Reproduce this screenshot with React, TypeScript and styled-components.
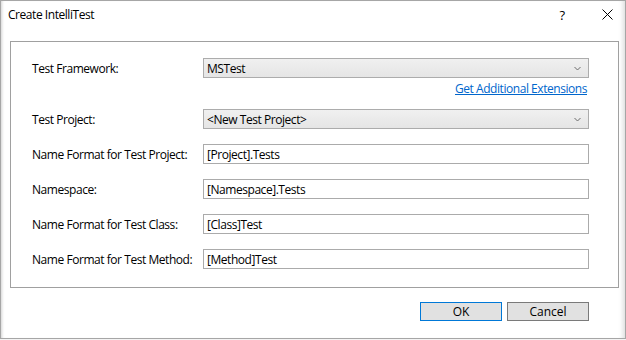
import React from 'react';
import styled, { createGlobalStyle } from 'styled-components';

const GlobalStyle = createGlobalStyle`
  html, body {
    margin: 0;
    padding: 0;
    background: #f3f3f3;
  }
  * {
    box-sizing: border-box;
  }
`;

const Window = styled.div`
  width: 626px;
  height: 339px;
  background: #ffffff;
  border: 1px solid #a6a6a6;
  box-shadow: inset 3px 0 3px -2px rgba(0, 0, 0, 0.18), inset -6px 0 5px -4px rgba(0, 0, 0, 0.14);
  display: flex;
  flex-direction: column;
  font-family: "Segoe UI", "Open Sans", "Noto Sans", sans-serif;
  font-size: 12px;
  letter-spacing: -0.45px;
  color: #000;
`;

const TitleBar = styled.div`
  height: 27px;
  display: flex;
  align-items: center;
  padding-left: 7px;
`;

const Title = styled.div`
  flex: 1;
`;

const TitleButton = styled.div<{ $gap?: number }>`
  width: 36px;
  height: 27px;
  margin-right: ${(p) => p.$gap ?? 0}px;
  display: flex;
  align-items: center;
  justify-content: center;
`;

const Help = styled.span`
  font-size: 13px;
`;

const Content = styled.div`
  padding: 13px 6px 0 9px;
  display: flex;
  flex-direction: column;
`;

const GroupBox = styled.div`
  border: 1px solid #a0a0a0;
  padding: 16px 29px 18px 21px;
  display: grid;
  grid-template-columns: 171px 1fr;
  align-items: center;
`;

const Label = styled.div<{ $top?: number }>`
  margin-top: ${(p) => p.$top ?? 0}px;
  white-space: nowrap;
`;

const Combo = styled.div<{ $top?: number }>`
  margin-top: ${(p) => p.$top ?? 0}px;
  height: 20px;
  border: 1px solid #acacac;
  background: linear-gradient(#f0f0f0, #e5e5e5);
  display: flex;
  align-items: center;
  padding: 0 7px 0 3px;
`;

const ComboText = styled.span`
  flex: 1;
`;

const TextBox = styled.div<{ $top?: number }>`
  margin-top: ${(p) => p.$top ?? 0}px;
  height: 20px;
  border: 1px solid #ababab;
  background: #fff;
  display: flex;
  align-items: center;
  padding: 0 3px;
`;

const LinkRow = styled.div`
  grid-column: 2;
  margin-top: 2px;
  height: 17px;
  text-align: right;
  padding-right: 2px;
`;

const Link = styled.a`
  color: #0066cc;
  text-decoration: underline;
  cursor: pointer;
`;

const ButtonRow = styled.div`
  margin-top: 14px;
  display: flex;
  justify-content: flex-end;
  gap: 5px;
  padding-right: 30px;
`;

const Button = styled.button<{ $default?: boolean }>`
  width: 82px;
  height: 19px;
  margin: 0;
  padding: 0;
  font: inherit;
  color: #000;
  background: #e1e1e1;
  border: 1px solid ${(p) => (p.$default ? '#0078d7' : '#7a7a7a')};
`;

const Chevron = () => (
  <svg width="7" height="5" viewBox="0 0 7 5">
    <path d="M0.5 1 L3.5 4 L6.5 1" fill="none" stroke="#6d6d6d" strokeWidth="1" />
  </svg>
);

const CloseIcon = () => (
  <svg width="11" height="11" viewBox="0 0 11 11">
    <path d="M0.5 0.5 L10.5 10.5 M10.5 0.5 L0.5 10.5" stroke="#000" strokeWidth="1" />
  </svg>
);

const fields: { label: string; value: string }[] = [
  { label: 'Name Format for Test Project:', value: '[Project].Tests' },
  { label: 'Namespace:', value: '[Namespace].Tests' },
  { label: 'Name Format for Test Class:', value: '[Class]Test' },
  { label: 'Name Format for Test Method:', value: '[Method]Test' },
];

export default function App() {
  return (
    <>
      <GlobalStyle />
      <Window>
        <TitleBar>
          <Title>Create IntelliTest</Title>
          <TitleButton $gap={9}>
            <Help>?</Help>
          </TitleButton>
          <TitleButton>
            <CloseIcon />
          </TitleButton>
        </TitleBar>
        <Content>
          <GroupBox>
            <Label>Test Framework:</Label>
            <Combo>
              <ComboText>MSTest</ComboText>
              <Chevron />
            </Combo>
            <LinkRow>
              <Link>Get Additional Extensions</Link>
            </LinkRow>
            <Label $top={12}>Test Project:</Label>
            <Combo $top={12}>
              <ComboText>&lt;New Test Project&gt;</ComboText>
              <Chevron />
            </Combo>
            {fields.map((f) => (
              <React.Fragment key={f.label}>
                <Label $top={15}>{f.label}</Label>
                <TextBox $top={15}>{f.value}</TextBox>
              </React.Fragment>
            ))}
          </GroupBox>
          <ButtonRow>
            <Button $default>OK</Button>
            <Button>Cancel</Button>
          </ButtonRow>
        </Content>
      </Window>
    </>
  );
}
